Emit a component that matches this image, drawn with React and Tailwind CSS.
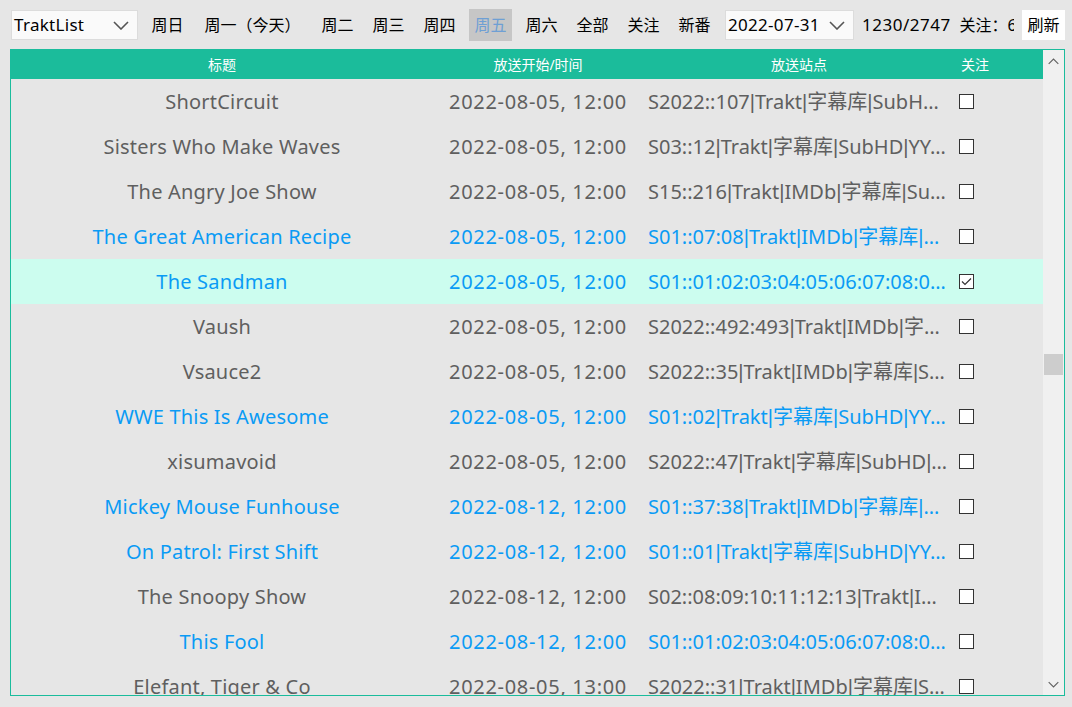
import React from "react";

const rows = [
  { title: "ShortCircuit", time: "2022-08-05, 12:00", site: "S2022::107|Trakt|字幕库|SubHD|YYeTs|Zimuku", blue: false },
  { title: "Sisters Who Make Waves", time: "2022-08-05, 12:00", site: "S03::12|Trakt|字幕库|SubHD|YYeTs|Zimuku", blue: false },
  { title: "The Angry Joe Show", time: "2022-08-05, 12:00", site: "S15::216|Trakt|IMDb|字幕库|SubHD|YYeTs", blue: false },
  { title: "The Great American Recipe", time: "2022-08-05, 12:00", site: "S01::07:08|Trakt|IMDb|字幕库|SubHD|YYeTs", blue: true },
  { title: "The Sandman", time: "2022-08-05, 12:00", site: "S01::01:02:03:04:05:06:07:08:09:10|Trakt", blue: true, sel: true },
  { title: "Vaush", time: "2022-08-05, 12:00", site: "S2022::492:493|Trakt|IMDb|字幕库|SubHD", blue: false },
  { title: "Vsauce2", time: "2022-08-05, 12:00", site: "S2022::35|Trakt|IMDb|字幕库|SubHD|YYeTs", blue: false },
  { title: "WWE This Is Awesome", time: "2022-08-05, 12:00", site: "S01::02|Trakt|字幕库|SubHD|YYeTs|Zimuku", blue: true },
  { title: "xisumavoid", time: "2022-08-05, 12:00", site: "S2022::47|Trakt|字幕库|SubHD|YYeTs", blue: false },
  { title: "Mickey Mouse Funhouse", time: "2022-08-12, 12:00", site: "S01::37:38|Trakt|IMDb|字幕库|SubHD|YYeTs", blue: true },
  { title: "On Patrol: First Shift", time: "2022-08-12, 12:00", site: "S01::01|Trakt|字幕库|SubHD|YYeTs|Zimuku", blue: true },
  { title: "The Snoopy Show", time: "2022-08-12, 12:00", site: "S02::08:09:10:11:12:13|Trakt|IMDb|字幕库", blue: false },
  { title: "This Fool", time: "2022-08-12, 12:00", site: "S01::01:02:03:04:05:06:07:08:09:10|Trakt", blue: true },
  { title: "Elefant, Tiger & Co", time: "2022-08-05, 13:00", site: "S2022::31|Trakt|IMDb|字幕库|SubHD|YYeTs", blue: false },
];

const days = [
  { label: "周日", w: "w-[43px]" },
  { label: "周一（今天）", w: "w-[111px]" },
  { label: "周二", w: "w-[43px]" },
  { label: "周三", w: "w-[43px]" },
  { label: "周四", w: "w-[43px]" },
  { label: "周五", w: "w-[43px]", active: true },
  { label: "周六", w: "w-[43px]" },
  { label: "全部", w: "w-[43px]" },
  { label: "关注", w: "w-[43px]" },
  { label: "新番", w: "w-[43px]" },
];

function Chevron({ dir = "down", className = "" }) {
  const d = dir === "down" ? "M1 1l7 7 7-7" : "M1 8l7-7 7 7";
  return (
    <svg width="16" height="9" viewBox="0 0 16 9" className={className}>
      <path d={d} fill="none" stroke="currentColor" strokeWidth="1.6" />
    </svg>
  );
}

function Select({ value, w }) {
  return (
    <div className={`${w} h-[30px] bg-[#fafafa] border border-[#dcdcdc] flex items-center justify-between pl-[2px] pr-[8px] text-[17px] tracking-[0.3px] text-black`}>
      <span>{value}</span>
      <Chevron className="text-[#555]" />
    </div>
  );
}

function Checkbox({ checked }) {
  return (
    <div className="w-[15px] h-[15px] border border-[#333] bg-white flex items-center justify-center">
      {checked && (
        <svg width="11" height="9" viewBox="0 0 11 9">
          <path d="M1 4.5l3 3L10 1.5" fill="none" stroke="#333" strokeWidth="1.2" />
        </svg>
      )}
    </div>
  );
}

function Site({ text }) {
  const parts = text.split("|");
  return (
    <>
      {parts.map((p, i) => (
        <React.Fragment key={i}>
          {i > 0 && <span className="font-['Liberation_Sans',sans-serif]">|</span>}
          {p}
        </React.Fragment>
      ))}
    </>
  );
}

export default function App() {
  return (
    <div className="w-[1072px] h-[707px] bg-[#e6e6e6] overflow-hidden font-['Noto_Sans','Noto_Sans_CJK_SC',sans-serif]">
      <div className="flex items-center h-[30px] mt-[10px] pl-[11px] gap-[8px]">
        <Select value="TraktList" w="w-[127px]" />
        <div className="flex gap-[8px]">
          {days.map((d) => (
            <div
              key={d.label}
              className={`${d.w} h-[32px] flex items-center justify-center text-[16px] ${d.active ? "bg-[#c6c6c6] text-[#6e9fd4]" : "text-black"}`}
            >
              {d.label}
            </div>
          ))}
        </div>
        <div className="ml-px">
          <Select value="2022-07-31" w="w-[129px]" />
        </div>
        <div className="w-[152px] overflow-hidden whitespace-nowrap text-[17px] text-black">
          <span className="tracking-[0.5px]">1230/2747</span>&nbsp; <span className="text-[16px]">关注：62</span>
        </div>
        <div className="w-[43px] h-[30px] bg-white flex items-center justify-center text-[16px] text-black">刷新</div>
      </div>

      <div className="mt-[9px] ml-[10px] w-[1055px] h-[647px] border border-[#1abc9c] flex">
        <div className="w-[1032px] flex flex-col">
          <div className="h-[29px] shrink-0 bg-[#1bbc9b] flex items-center text-white text-[14px]">
            <div className="w-[422px] text-center">标题</div>
            <div className="w-[210px] text-center">放送开始/时间</div>
            <div className="w-[312px] text-center">放送站点</div>
            <div className="w-[40px] text-center">关注</div>
          </div>
          <div className="flex-1 overflow-hidden">
            {rows.map((r) => (
              <div
                key={r.title}
                className={`h-[45px] flex items-center text-[20px] ${r.blue ? "text-[#0a9bf5]" : "text-[#5f5f5f]"} ${r.sel ? "bg-[#ccfdef]" : ""}`}
              >
                <div className="w-[422px] text-center whitespace-nowrap tracking-[0.2px]">{r.title}</div>
                <div className="w-[210px] text-center whitespace-nowrap tracking-[0.7px]">{r.time}</div>
                <div className="w-[312px] px-[5px] text-center truncate">
                  <Site text={r.site} />
                </div>
                <div className="w-[40px] pl-[4px]">
                  <Checkbox checked={r.sel} />
                </div>
              </div>
            ))}
          </div>
        </div>
        <div className="w-[21px] bg-[#f0f0f0] flex flex-col">
          <div className="h-[22px] flex items-center justify-center text-[#606060]">
            <Chevron dir="up" className="w-[11px] h-[7px]" />
          </div>
          <div className="flex-1 px-px">
            <div className="mt-[282px] h-[21px] bg-[#cdcdcd]" />
          </div>
          <div className="h-[22px] flex items-center justify-center text-[#606060]">
            <Chevron className="w-[11px] h-[7px]" />
          </div>
        </div>
      </div>
    </div>
  );
}
